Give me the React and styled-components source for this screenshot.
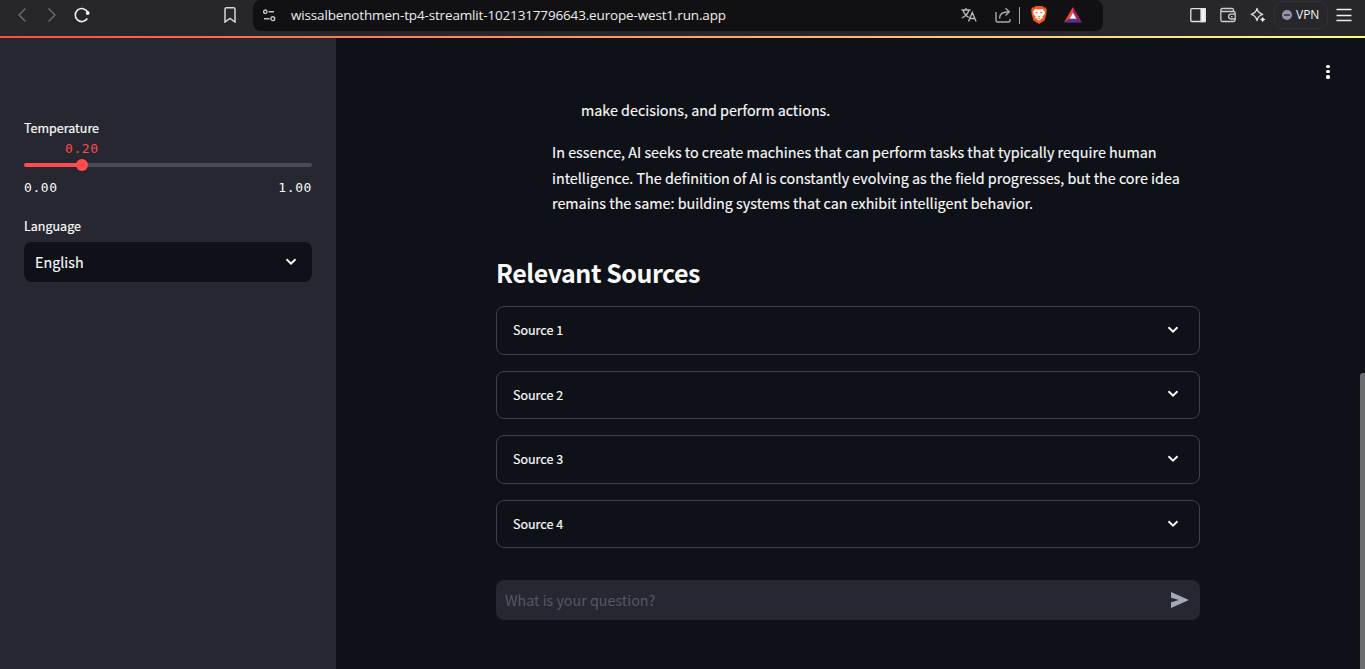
import React from "react";
import styled, { createGlobalStyle } from "styled-components";

const sans = `"Noto Sans CJK SC", "Noto Sans", sans-serif`;

const GlobalStyle = createGlobalStyle`
  *, *::before, *::after { box-sizing: border-box; }
  html, body { margin: 0; height: 100%; overflow: hidden; background: #0e1117; }
  #root { height: 100%; }
`;

const Window = styled.div`
  display: flex;
  flex-direction: column;
  width: 100%;
  height: 100vh;
  color: #fafafa;
  font-family: ${sans};
`;

const BrowserBar = styled.header`
  display: flex;
  align-items: flex-start;
  flex: none;
  height: 36px;
  background: #26262b;
`;

const Tools = styled.div`
  display: flex;
  align-items: center;
  height: 30px;
  width: ${(p) => p.$width}px;
  padding-left: ${(p) => p.$start || 0}px;
`;

const Icon = styled.svg`
  display: block;
  flex: none;
  width: ${(p) => p.$w ?? 16}px;
  height: ${(p) => p.$h ?? 16}px;
  margin-left: ${(p) => p.$gap ?? 0}px;
  fill: none;
  stroke: ${(p) => p.$color ?? "#d8d8da"};
  stroke-width: ${(p) => p.$stroke ?? 1.3};
`;

const AddressBar = styled.div`
  display: flex;
  align-items: center;
  width: 850px;
  height: 31px;
  padding: 0 21px 1px 10px;
  border-radius: 8px;
  background: #111114;
`;

const Url = styled.span`
  flex: 1;
  margin-left: 15px;
  font: 13.5px/20px "Open Sans", sans-serif;
  letter-spacing: -0.157px;
  color: #ededee;
  white-space: nowrap;
`;

const Divider = styled.span`
  width: 1px;
  height: 17px;
  margin-left: 8px;
  background: #a5a5a8;
`;

const VpnButton = styled.div`
  display: flex;
  align-items: center;
  width: 54px;
  height: 28px;
  margin-left: 8px;
  padding-left: 7px;
  border: 1px solid #313136;
  border-radius: 9px;
  font: 12px/16px "Open Sans", sans-serif;
  color: #f0f0f2;
`;

const VpnDot = styled.span`
  display: grid;
  place-items: center;
  width: 10px;
  height: 10px;
  margin-right: 4px;
  border-radius: 50%;
  background: #9395ab;
  &::after {
    content: "";
    width: 6px;
    height: 2px;
    background: #45475c;
  }
`;

const Decoration = styled.div`
  flex: none;
  height: 2px;
  background: linear-gradient(90deg, #ff4b4b, #fffd80);
`;

const Page = styled.div`
  display: flex;
  flex: 1;
  min-height: 0;
`;

const Sidebar = styled.aside`
  width: 336px;
  padding: 80px 24px 0;
  background: #262730;
`;

const Label = styled.div`
  font-size: 12.5px;
  line-height: 20px;
  -webkit-text-stroke: 0.2px currentColor;
`;

const Slider = styled.div`
  font: 13px/20px "DejaVu Sans Mono", monospace;
  letter-spacing: 0.6px;
`;

const Value = styled.div`
  width: 34px;
  margin-left: 41px;
  padding-top: 1px;
  color: #ff4b4b;
`;

const Track = styled.div`
  display: flex;
  align-items: center;
  height: 4px;
  margin: 4px 0 11px;
  border-radius: 4px;
  background: linear-gradient(90deg, #ff4b4b 20%, #484a56 20%);
`;

const Thumb = styled.span`
  width: 12px;
  height: 12px;
  margin-left: 51.6px;
  border-radius: 50%;
  background: #ff4b4b;
`;

const Bounds = styled.div`
  display: flex;
  justify-content: space-between;
  margin-bottom: 18px;
`;

const Select = styled.div`
  display: flex;
  align-items: center;
  justify-content: space-between;
  height: 40px;
  margin-top: 6px;
  padding: 0 15px 1px 11px;
  border-radius: 8px;
  background: #0e1117;
  font-size: 14.3px;
  line-height: 21px;
  -webkit-text-stroke: 0.15px currentColor;
`;

const Main = styled.main`
  display: flex;
  flex: 1;
  justify-content: space-between;
  padding-left: 160px;
  background: #0e1117;
`;

const Content = styled.div`
  width: 704px;
  padding-top: 59.4px;
`;

const Message = styled.section`
  padding: 0 0 0 56px;
  font-size: 14.33px;
  line-height: 25.6px;
  white-space: nowrap;
  -webkit-text-stroke: 0.15px currentColor;
`;

const Paragraph = styled.p`
  margin: 0 0 16px;
  padding-left: ${(p) => (p.$indent ? 29 : 0)}px;
`;

const Heading = styled.h3`
  margin: 39.6px 0 16.75px;
  font-size: 25px;
  font-weight: 600;
  line-height: 34px;
  letter-spacing: -0.47px;
`;

const Sources = styled.div`
  display: flex;
  flex-direction: column;
  gap: 16.2px;
`;

const Source = styled.div`
  display: flex;
  align-items: center;
  justify-content: space-between;
  height: 48.4px;
  padding: 0 20px 1px 16px;
  border: 1px solid #3d4044;
  border-radius: 8px;
  font-size: 12.5px;
  line-height: 21px;
  -webkit-text-stroke: 0.2px currentColor;
`;

const ChatInput = styled.div`
  display: flex;
  align-items: center;
  justify-content: space-between;
  height: 40px;
  margin-top: 31.6px;
  padding: 0 11px 0 9px;
  border-radius: 8px;
  background: #262730;
  color: #555867;
  font-size: 14.3px;
`;

const Edge = styled.div`
  display: flex;
  justify-content: space-between;
  width: 45px;
`;

const MenuDots = styled.div`
  display: flex;
  flex-direction: column;
  gap: 2px;
  padding: 27px 0 0 6.4px;
  span {
    width: 3.2px;
    height: 3.2px;
    border-radius: 50%;
    background: #fafafa;
  }
`;

const ScrollThumb = styled.div`
  width: 5px;
  margin-top: 335px;
  border-radius: 3px 0 0 0;
  background: #6c6d71;
`;

const Chevron = () => (
  <Icon $w={12} $h={8} $color="#fafafa" $stroke={1.9} viewBox="0 0 12 8">
    <path d="M1.500 1.200l4.500 4.400 4.500-4.400" />
  </Icon>
);

const Toolbar = () => (
  <BrowserBar>
    <Tools $width={253} $start={16}>
      <Icon $w={12} viewBox="0 0 12 16" $color="#707075"><path d="M9.500 1.500L3 8l6.500 6.500" /></Icon>
      <Icon $w={12} $gap={18} viewBox="0 0 12 16" $color="#707075"><path d="M2.500 1.500L9 8l-6.500 6.500" /></Icon>
      <Icon $gap={16} viewBox="0 0 16 16" $color="#f1f1f2" $stroke={1.6}>
        <path d="M13.300 11.500A6.500 6.500 0 1 1 13.500 5" />
        <circle cx="13.700" cy="6" r="1.900" fill="#f1f1f2" stroke="none" />
      </Icon>
      <Icon $w={12} $gap={134} viewBox="0 0 12 16" $stroke={1.5}><path d="M1 2.200Q1 .8 2.400.8h7.200Q11 .8 11 2.200V15l-5-3.500L1 15z" /></Icon>
    </Tools>
    <AddressBar>
      <Icon $w={13} $h={13} viewBox="0 0 13 13" $color="#c4c4c7" $stroke={1.4}>
        <circle cx="2.300" cy="2.700" r="1.700" /><path d="M5.500 2.700h5.500M1 9.700h5.500" /><circle cx="9.800" cy="9.700" r="1.900" />
      </Icon>
      <Url>wissalbenothmen-tp4-streamlit-1021317796643.europe-west1.run.app</Url>
      <Icon viewBox="0 0 16 16" $color="#b9b9bc">
        <path d="M.5 3h9M5 1v2M2 3c1 3.500 3 6 6 7.500M8 3C7 6.500 4 9.500.8 11M7.500 14.500l3.800-9 3.800 9M8.800 11.500h5" />
      </Icon>
      <Icon $gap={18} viewBox="0 0 16 16" $color="#a6a6a9" $stroke={1.4}>
        <path d="M1 5v8.200Q1 15 2.800 15h10.400Q15 15 15 13.200V12M4.500 11.500C4.500 7 8 4.800 14 4.800M10.500 1.200L14.300 4.800l-3.800 3.700" />
      </Icon>
      <Divider />
      <Icon $w={16} $h={18} $gap={11} viewBox="0 0 16 18" $stroke={0}>
        <path fill="#fb541c" d="M4.500 0h7l1.500 1.500 1.500-.2L16 4l-.6 1.700.2 1.300-2 7.500L8 18l-5.600-3.500L.4 7l.2-1.300L0 4l1.500-2.700 1.500.2z" />
        <path fill="#fff" d="M4.500 2.800L8 3.400l3.500-.6L14 5.800l-.5 2.500-2 2 .3 1.600L8 14.800l-3.800-2.900.3-1.600-2-2L2 5.800z" />
        <path fill="#fb541c" d="M4.200 6l2.500.3.100.8-1.200.5zM11.800 6l-2.500.3-.1.800 1.200.5zM6.500 9.500L8 10.200l1.500-.7-.3 1-1.200.6-1.200-.6zM6.300 12L8 11.700l1.700.3L8 13z" />
      </Icon>
      <Icon $w={18} $h={16} $gap={17} viewBox="0 0 18 16" $stroke={0}>
        <path fill="#ff4724" d="M9 0v5.500L5.500 11.700 0 15.500z" />
        <path fill="#9e1f63" d="M9 0v5.500l3.500 6.200 5.500 3.800z" />
        <path fill="#662d91" d="M0 15.500h18l-5.500-3.800h-7z" />
        <path fill="#fff" d="M9 5.500l3.500 6.200h-7z" />
      </Icon>
    </AddressBar>
    <Tools $width={262} $start={87}>
      <Icon viewBox="0 0 16 16" $color="#e2e2e4">
        <rect x=".8" y="1.700" width="14.400" height="12.800" rx="1" /><path fill="#f4f4f5" d="M11 1.700h4.200v12.800H11z" />
      </Icon>
      <Icon $gap={14} viewBox="0 0 16 16" $color="#cdcdd0">
        <path d="M13.500 4.500V3Q13.500 1.500 12 1.500H2.500Q.8 1.500.8 3.200v9.500Q.8 14.500 2.500 14.500h11q1.700 0 1.700-1.700V6.200Q15.200 4.500 13.500 4.500H1M15 7.200h-4a2.400 2.400 0 0 0 0 4.800h4M11 9.600h1.500" />
      </Icon>
      <Icon $gap={14} viewBox="0 0 16 16" $color="#dddde0">
        <path d="M7 1.500Q8 6 12.700 7.300 8 8.700 7 13.500 6 8.700 1.200 7.300 6 6 7 1.500z" strokeLinejoin="round" />
        <path fill="#f1f1f2" stroke="none" d="M12.700 9.700q.5 2.300 2.800 2.800-2.300.5-2.800 2.800-.5-2.300-2.800-2.800 2.300-.5 2.800-2.800z" />
      </Icon>
      <VpnButton><VpnDot />VPN</VpnButton>
      <Icon $gap={8} viewBox="0 0 16 16" $color="#eeeef0"><path d="M.5 2.500h15M.5 8.500h15M.5 13.500h15" /></Icon>
    </Tools>
  </BrowserBar>
);

export default function App() {
  return (
    <Window>
      <GlobalStyle />
      <Toolbar />
      <Decoration />
      <Page>
        <Sidebar>
          <Label>Temperature</Label>
          <Slider>
            <Value>0.20</Value>
            <Track><Thumb /></Track>
            <Bounds><span>0.00</span><span>1.00</span></Bounds>
          </Slider>
          <Label>Language</Label>
          <Select>English<Chevron /></Select>
        </Sidebar>
        <Main>
          <Content>
            <Message>
              <Paragraph $indent>make decisions, and perform actions.</Paragraph>
              <Paragraph>
                In essence, AI seeks to create machines that can perform tasks that typically require human<br />
                intelligence. The definition of AI is constantly evolving as the field progresses, but the core idea<br />
                remains the same: building systems that can exhibit intelligent behavior.
              </Paragraph>
            </Message>
            <Heading>Relevant Sources</Heading>
            <Sources>
              {[1, 2, 3, 4].map((n) => (
                <Source key={n}>Source {n}<Chevron /></Source>
              ))}
            </Sources>
            <ChatInput>
              What is your question?
              <Icon $w={18} $h={16} $stroke={0} viewBox="0 0 18 16">
                <path fill="#a3a8b8" d="M0 0l18 8-18 8V10.200L8 8 0 5.800z" />
              </Icon>
            </ChatInput>
          </Content>
          <Edge>
            <MenuDots><span /><span /><span /></MenuDots>
            <ScrollThumb />
          </Edge>
        </Main>
      </Page>
    </Window>
  );
}
